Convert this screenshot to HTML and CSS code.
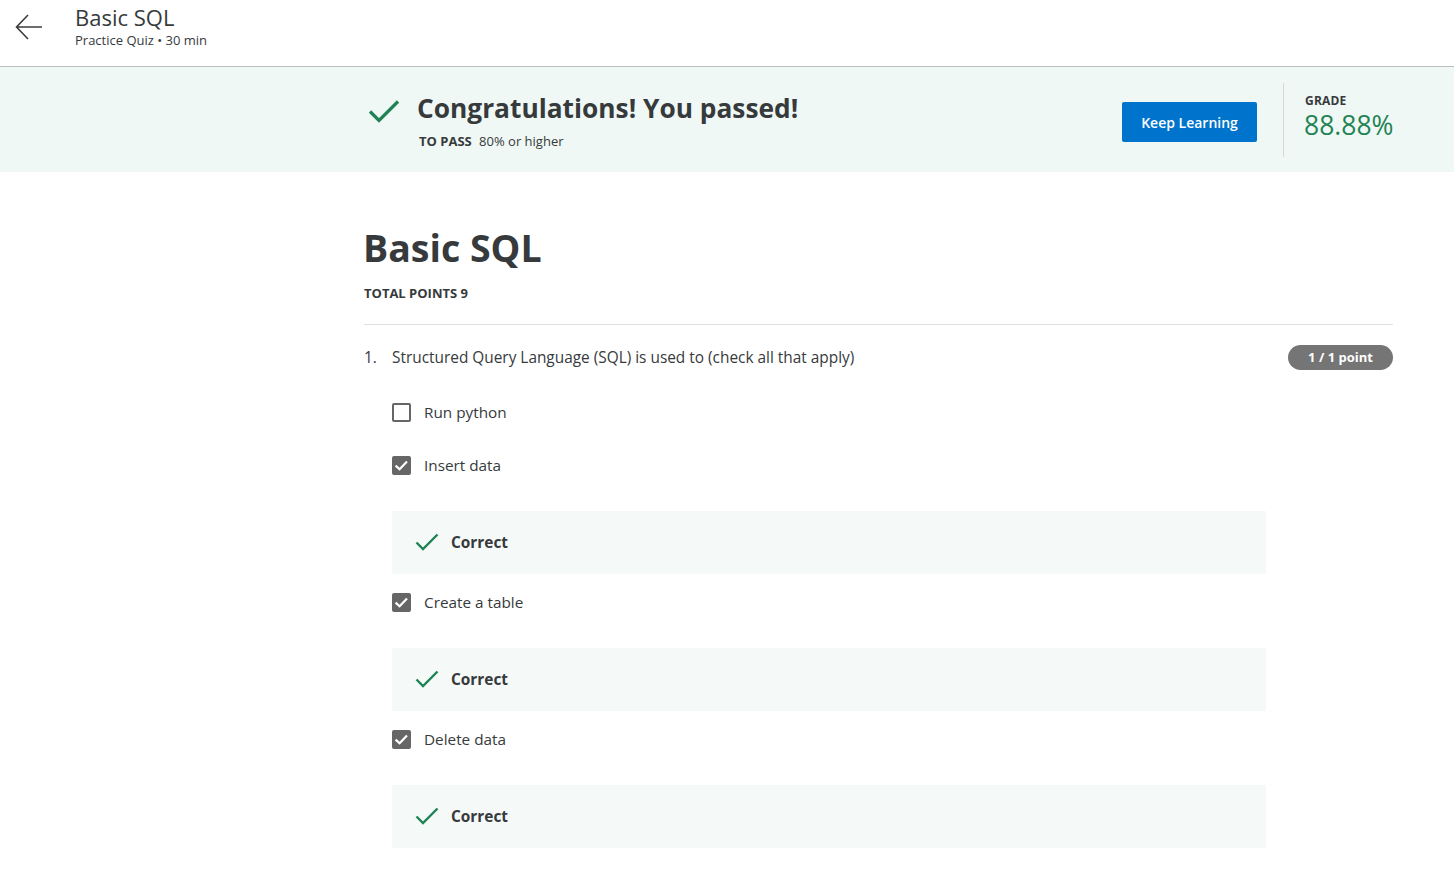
FILE: index.html
```html
<!DOCTYPE html>
<html lang="en">
<head>
<meta charset="utf-8">
<title>Basic SQL</title>
<link rel="stylesheet" href="styles.css">
</head>
<body>
<header class="topbar">
  <button class="back" aria-label="Back">
    <svg width="28" height="28" viewBox="0 0 28 28"><path d="M27 14H2M13 2L1.5 14 13 26" fill="none" stroke="#3c3c3c" stroke-width="1.6"/></svg>
  </button>
  <div class="topbar-text">
    <div class="topbar-title">Basic SQL</div>
    <div class="topbar-sub">Practice Quiz • 30 min</div>
  </div>
</header>
<section class="banner">
  <div class="wrap banner-inner">
    <svg class="banner-check" width="32" height="26" viewBox="0 0 32 26"><path d="M2 13.5L11 22.5 30 3.5" fill="none" stroke="#1f8354" stroke-width="3.2"/></svg>
    <div class="banner-text">
      <h2 class="banner-title">Congratulations! You passed!</h2>
      <div class="banner-pass"><b>TO PASS</b> 80% or higher</div>
    </div>
    <button class="btn">Keep Learning</button>
    <div class="grade">
      <div class="grade-label">GRADE</div>
      <div class="grade-value">88.88%</div>
    </div>
  </div>
</section>
<main class="wrap content">
  <h1 class="quiz-title">Basic SQL</h1>
  <div class="total">TOTAL POINTS 9</div>
  <div class="question">
    <div class="q-row">
      <span class="q-num">1.</span>
      <span class="q-text">Structured Query Language (SQL) is used to (check all that apply)</span>
      <span class="badge">1 / 1 point</span>
    </div>
    <div class="options">
      <div class="opt first"><span class="cb"></span><span>Run python</span></div>
      <div class="opt"><span class="cb on"><svg width="19" height="19" viewBox="0 0 19 19"><path d="M3.6 9.6L7.6 13.2 15 5.6" fill="none" stroke="#fff" stroke-width="2.2"/></svg></span><span>Insert data</span></div>
      <div class="feedback"><svg width="24" height="20" viewBox="0 0 24 20"><path d="M1.5 10.5L8 17 22.5 2.5" fill="none" stroke="#1f8354" stroke-width="2.4"/></svg><span>Correct</span></div>
      <div class="opt"><span class="cb on"><svg width="19" height="19" viewBox="0 0 19 19"><path d="M3.6 9.6L7.6 13.2 15 5.6" fill="none" stroke="#fff" stroke-width="2.2"/></svg></span><span>Create a table</span></div>
      <div class="feedback"><svg width="24" height="20" viewBox="0 0 24 20"><path d="M1.5 10.5L8 17 22.5 2.5" fill="none" stroke="#1f8354" stroke-width="2.4"/></svg><span>Correct</span></div>
      <div class="opt"><span class="cb on"><svg width="19" height="19" viewBox="0 0 19 19"><path d="M3.6 9.6L7.6 13.2 15 5.6" fill="none" stroke="#fff" stroke-width="2.2"/></svg></span><span>Delete data</span></div>
      <div class="feedback"><svg width="24" height="20" viewBox="0 0 24 20"><path d="M1.5 10.5L8 17 22.5 2.5" fill="none" stroke="#1f8354" stroke-width="2.4"/></svg><span>Correct</span></div>
    </div>
  </div>
</main>
</body>
</html>
```
FILE: styles.css
```css
* { box-sizing: border-box; }
html, body { margin: 0; padding: 0; background: #fff; }
body { font-family: "Open Sans", "Noto Sans", sans-serif; color: #373a3c; overflow: hidden; }

.topbar { height: 67px; border-bottom: 1px solid #bdbdbd; display: flex; align-items: flex-start; }
.back { background: none; border: 0; padding: 0; margin: 13px 0 0 15px; width: 28px; height: 28px; cursor: pointer; }
.back svg { display: block; }
.topbar-text { margin: 3px 0 0 32px; }
.topbar-title { font-size: 22px; line-height: 28px; color: #373a3c; }
.topbar-sub { font-size: 13px; line-height: 18px; color: #373a3c; }

.wrap { margin-left: 364px; width: 1029px; }

.banner { background: #eff8f5; height: 105px; }
.banner-inner { display: flex; align-items: flex-start; height: 100%; }
.banner-check { margin: 31px 0 0 4px; flex: none; }
.banner-text { margin: 22px 0 0 17px; flex: 1; }
.banner-title { font-size: 26.3px; font-weight: 700; line-height: 38px; margin: 0; color: #373a3c; }
.banner-pass { font-size: 13px; line-height: 18px; margin-top: 5px; margin-left: 2px; color: #373a3c; }
.banner-pass b { margin-right: 4px; }
.btn { margin-top: 35px; width: 135px; height: 40px; background: #0073cd; color: #fff; border: 0; border-radius: 2px; font-family: inherit; font-size: 14px; font-weight: 600; padding: 0; }
.grade { margin: 16px 0 0 26px; border-left: 1px solid #d6d6d6; height: 74px; padding: 10px 0 0 21px; width: 110px; }
.grade-label { font-size: 12px; font-weight: 700; line-height: 16px; letter-spacing: 0.2px; }
.grade-value { font-size: 26.5px; line-height: 30px; color: #1f8354; margin-left: -1px; margin-top: 1px; }

.content { padding-top: 51px; }
.quiz-title { font-size: 37.5px; font-weight: 700; line-height: 50px; margin: 0 0 0 -1px; color: #373a3c; }
.total { font-size: 13px; font-weight: 700; line-height: 18px; margin-top: 11px; }
.question { border-top: 1px solid #e1e1e1; margin-top: 22px; padding-top: 20px; }
.q-row { display: flex; align-items: center; height: 25px; }
.q-num { width: 28px; font-size: 15.4px; }
.q-text { flex: 1; font-size: 15.4px; }
.badge { background: #757575; color: #fff; font-size: 13px; font-weight: 700; height: 25px; line-height: 25px; width: 105px; text-align: center; border-radius: 13px; }

.options { margin-left: 28px; width: 874px; padding-top: 14px; }
.opt { display: flex; align-items: flex-start; height: 73.5px; padding-top: 17px; font-size: 15.3px; line-height: 22px; }
.opt.first { height: 53px; }
.cb { width: 19px; height: 19px; margin-top: 1.5px; border: 2px solid #666; border-radius: 2px; margin-right: 13px; flex: none; position: relative; }
.cb.on { background: #666; }
.cb svg { position: absolute; left: -2px; top: -2px; }
.feedback { background: #f5f9f8; height: 63.5px; display: flex; align-items: center; padding-left: 23px; font-size: 15.4px; font-weight: 700; }
.feedback svg { margin-right: 12px; }
```
